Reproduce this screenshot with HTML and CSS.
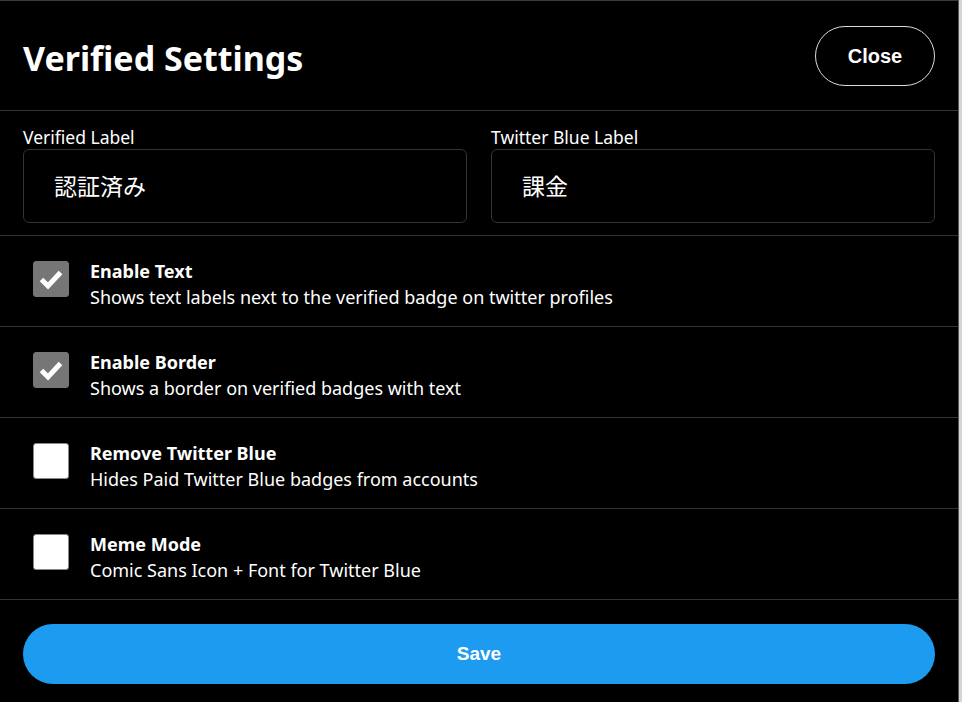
FILE: index.html
```html
<!DOCTYPE html>
<html lang="en">
<head>
    <meta charset="UTF-8">
    <meta name="viewport" content="width=device-width, initial-scale=1.0">
    <title>Verified Settings</title>
    <link rel="stylesheet" href="styles.css">
</head>
<body>
    <div class="dialog">
        <div class="header">
            <h1>Verified Settings</h1>
            <button type="button" class="close-btn">Close</button>
        </div>

        <div class="fields">
            <div class="field">
                <label>Verified Label</label>
                <div class="text-box">認証済み</div>
            </div>
            <div class="field">
                <label>Twitter Blue Label</label>
                <div class="text-box">課金</div>
            </div>
        </div>

        <div class="option">
            <span class="check checked">
                <svg width="28" height="28" viewBox="0 0 28 28"><polyline points="4.5,14.5 11,21 23.5,7.5" fill="none" stroke="#fff" stroke-width="5"/></svg>
            </span>
            <div class="option-text">
                <div class="option-title">Enable Text</div>
                <div class="option-desc">Shows text labels next to the verified badge on twitter profiles</div>
            </div>
        </div>

        <div class="option">
            <span class="check checked">
                <svg width="28" height="28" viewBox="0 0 28 28"><polyline points="4.5,14.5 11,21 23.5,7.5" fill="none" stroke="#fff" stroke-width="5"/></svg>
            </span>
            <div class="option-text">
                <div class="option-title">Enable Border</div>
                <div class="option-desc">Shows a border on verified badges with text</div>
            </div>
        </div>

        <div class="option">
            <span class="check"></span>
            <div class="option-text">
                <div class="option-title">Remove Twitter Blue</div>
                <div class="option-desc">Hides Paid Twitter Blue badges from accounts</div>
            </div>
        </div>

        <div class="option">
            <span class="check"></span>
            <div class="option-text">
                <div class="option-title">Meme Mode</div>
                <div class="option-desc">Comic Sans Icon + Font for Twitter Blue</div>
            </div>
        </div>

        <div class="footer">
            <button type="button" class="save-btn">Save</button>
        </div>
    </div>
</body>
</html>
```

FILE: styles.css
```css
body {
    margin: 0;
    background: #d4d4d4;
    font-family: "Noto Sans", "Noto Sans CJK JP", sans-serif;
    color: #fff;
}
.dialog {
    width: 958px;
    height: 701px;
    background: #000;
    border-top: 1px solid #3a3a3a;
    border-right: 1px solid #555;
}
.header {
    display: flex;
    align-items: center;
    justify-content: space-between;
    height: 109px;
    padding: 0 23px;
    border-bottom: 1px solid #333;
}
h1 {
    margin: 0;
    font-size: 34px;
    font-weight: 700;
    margin-top: 4px;
}
.close-btn {
    width: 120px;
    height: 60px;
    background: #000;
    color: #fff;
    border: 1px solid #ddd;
    border-radius: 30px;
    font-family: "Liberation Sans", Arial, sans-serif;
    font-weight: 700;
    font-size: 20px;
    margin-top: 1px;
}
.fields {
    display: grid;
    grid-template-columns: 1fr 1fr;
    gap: 24px;
    padding: 15px 23px 12px;
    border-bottom: 1px solid #333;
}
.field label {
    display: block;
    font-size: 17.5px;
    line-height: 23px;
}
.text-box {
    box-sizing: border-box;
    height: 74px;
    border: 1px solid #333;
    border-radius: 6px;
    padding: 0 30px 3px;
    display: flex;
    align-items: center;
    font-size: 23px;
    font-family: "Noto Sans CJK JP", sans-serif;
}
.option {
    display: flex;
    align-items: flex-start;
    gap: 21px;
    padding: 0 33px;
    border-bottom: 1px solid #333;
    box-sizing: border-box;
    height: 91px;
}
.check {
    flex: none;
    width: 34px;
    height: 34px;
    margin-top: 25px;
    border: 1px solid #888;
    border-radius: 3px;
    background: #fff;
    display: flex;
    align-items: center;
    justify-content: center;
}
.check.checked {
    background: #767676;
    border-color: #767676;
}
.option-text {
    margin-top: 22px;
}
.option-title {
    font-weight: 700;
    font-size: 18px;
    line-height: 26px;
}
.option-desc {
    font-size: 18px;
    line-height: 26px;
}
.footer {
    padding: 24px 23px 0;
}
.save-btn {
    display: block;
    width: 100%;
    height: 60px;
    border: none;
    border-radius: 30px;
    background: #1d9bf0;
    color: #fff;
    font-family: "Liberation Sans", Arial, sans-serif;
    font-weight: 700;
    font-size: 19px;
}
```
